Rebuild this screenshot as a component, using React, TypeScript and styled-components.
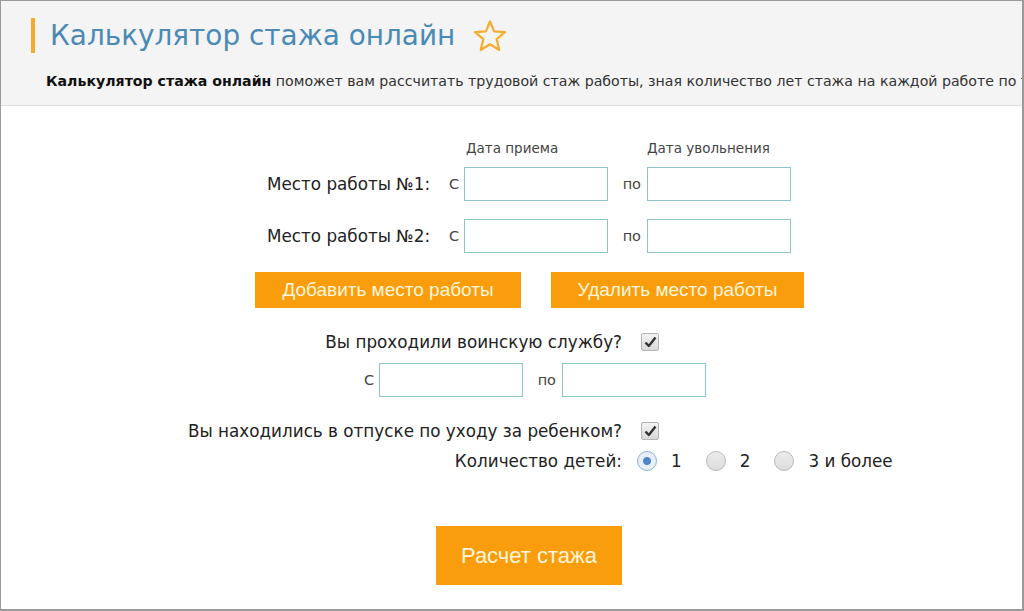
import styled, { createGlobalStyle } from "styled-components"

const Global = createGlobalStyle`
  html, body {
    margin: 0;
    padding: 0;
    background: #fff;
  }
  body {
    font-family: "DejaVu Sans", Verdana, sans-serif;
    color: #333;
  }
`

const Frame = styled.div`
  width: 1024px;
  height: 611px;
  box-sizing: border-box;
  border: 1px solid #9a9a9a;
  border-width: 1px 2px 2px 1px;
  overflow: hidden;
  background: #fff;
`

const Header = styled.header`
  background: #f4f4f4;
  border-bottom: 1px solid #dedede;
  height: 105px;
  box-sizing: border-box;
  padding: 17px 0 0 30px;
  overflow: hidden;
`

const TitleRow = styled.div`
  display: flex;
  align-items: center;
  gap: 18px;
`

const Title = styled.h1`
  margin: 0;
  padding-left: 15px;
  border-left: 4px solid #f2aa35;
  font-weight: normal;
  font-size: 27.9px;
  line-height: 35px;
  color: #4a8ab5;
`

const Intro = styled.p`
  margin: 20px 0 0 15px;
  font-size: 14.15px;
  white-space: nowrap;
  color: #333;

  b {
    color: #111;
  }
`

const Form = styled.div`
  padding-top: 34px;
`

const Line = styled.div<{ $left: number; $top?: number }>`
  display: flex;
  align-items: center;
  margin-left: ${(p) => p.$left}px;
  margin-top: ${(p) => p.$top ?? 0}px;
`

const Caption = styled.span<{ $w: number }>`
  width: ${(p) => p.$w}px;
  font-size: 13.5px;
  color: #444;
`

const JobLabel = styled.span`
  font-size: 16.8px;
  color: #222;
  width: 182px;
`

const Small = styled.span<{ $w: number; $right?: boolean }>`
  font-size: 14.5px;
  color: #444;
  width: ${(p) => p.$w}px;
  box-sizing: border-box;
  text-align: ${(p) => (p.$right ? "right" : "left")};
  padding-right: ${(p) => (p.$right ? 6 : 0)}px;
`

const DateInput = styled.input`
  width: 144px;
  height: 34px;
  box-sizing: border-box;
  border: 1px solid #8cc3cf;
  background: #fff;
  padding: 0 6px;
  outline: none;
`

const Button = styled.button<{ $big?: boolean; $w: number }>`
  width: ${(p) => p.$w}px;
  background: #f99d0c;
  border: none;
  color: #fff6dc;
  font-family: "Liberation Sans", Arial, sans-serif;
  font-size: ${(p) => (p.$big ? 22 : 19)}px;
  height: ${(p) => (p.$big ? 59 : 36)}px;
  padding: 0;
  cursor: pointer;
`

const Gap = styled.span<{ $w: number }>`
  width: ${(p) => p.$w}px;
`

const Question = styled.div<{ $top: number }>`
  display: grid;
  grid-template-columns: 621px auto;
  column-gap: 19px;
  align-items: center;
  margin-top: ${(p) => p.$top}px;
`

const QText = styled.span`
  text-align: right;
  font-size: 16.8px;
  color: #222;
`

const Check = styled.span`
  width: 18px;
  height: 18px;
  box-sizing: border-box;
  border: 1px solid #b5b5b5;
  border-radius: 2px;
  background: linear-gradient(#f2f2f2, #d9d9d9);
  display: flex;
  align-items: center;
  justify-content: center;
`

const Options = styled.div`
  display: flex;
  align-items: center;
  margin-left: -4px;
`

const Radio = styled.span<{ $on?: boolean }>`
  width: 20px;
  height: 20px;
  box-sizing: border-box;
  border-radius: 50%;
  border: 1px solid ${(p) => (p.$on ? "#8fb2d6" : "#b9b9b9")};
  background: ${(p) =>
    p.$on
      ? "radial-gradient(circle, #4b86c6 0 3.5px, #e8eef7 4.5px)"
      : "linear-gradient(#ececec, #dcdcdc)"};
  margin-right: 14px;
`

const OptText = styled.span`
  font-size: 16.8px;
  color: #222;
  margin-right: 24px;
`

const Tick = () => (
  <svg width="13" height="12" viewBox="0 0 13 12">
    <path d="M1.5 6.5 L4.8 10 L11.5 1.5" fill="none" stroke="#333" strokeWidth="2.4" strokeLinejoin="round" />
  </svg>
)

const Star = () => (
  <svg width="34" height="32" viewBox="0 0 34 32">
    <path
      d="M17 1.5 L21.1 11.3 L32 12.2 L23.7 19.2 L26.3 30 L17 24.2 L7.7 30 L10.3 19.2 L2 12.2 L12.9 11.3 Z"
      fill="none"
      stroke="#f5ad2e"
      strokeWidth="2.2"
      strokeLinejoin="round"
    />
  </svg>
)

export default function App() {
  return (
    <>
      <Global />
      <Frame>
        <Header>
          <TitleRow>
            <Title>Калькулятор стажа онлайн</Title>
            <Star />
          </TitleRow>
          <Intro>
            <b>Калькулятор стажа онлайн</b> поможет вам рассчитать трудовой стаж работы, зная количество лет стажа на каждой работе по трудовой книжке
          </Intro>
        </Header>
        <Form>
          <Line $left={465}>
            <Caption $w={181}>Дата приема</Caption>
            <Caption $w={140}>Дата увольнения</Caption>
          </Line>
          <Line $left={266} $top={11}>
            <JobLabel>Место работы №1:</JobLabel>
            <Small $w={15}>С</Small>
            <DateInput />
            <Small $w={39} $right>по</Small>
            <DateInput />
          </Line>
          <Line $left={266} $top={18}>
            <JobLabel>Место работы №2:</JobLabel>
            <Small $w={15}>С</Small>
            <DateInput />
            <Small $w={39} $right>по</Small>
            <DateInput />
          </Line>
          <Line $left={254} $top={19}>
            <Button $w={266}>Добавить место работы</Button>
            <Gap $w={30} />
            <Button $w={253}>Удалить место работы</Button>
          </Line>
          <Question $top={24}>
            <QText>Вы проходили воинскую службу?</QText>
            <Check>
              <Tick />
            </Check>
          </Question>
          <Line $left={363} $top={11}>
            <Small $w={15}>С</Small>
            <DateInput />
            <Small $w={39} $right>по</Small>
            <DateInput />
          </Line>
          <Question $top={24}>
            <QText>Вы находились в отпуске по уходу за ребенком?</QText>
            <Check>
              <Tick />
            </Check>
          </Question>
          <Question $top={10}>
            <QText>Количество детей:</QText>
            <Options>
              <Radio $on />
              <OptText>1</OptText>
              <Radio />
              <OptText>2</OptText>
              <Radio />
              <OptText>3 и более</OptText>
            </Options>
          </Question>
          <Line $left={435} $top={55}>
            <Button $big $w={186}>Расчет стажа</Button>
          </Line>
        </Form>
      </Frame>
    </>
  )
}
